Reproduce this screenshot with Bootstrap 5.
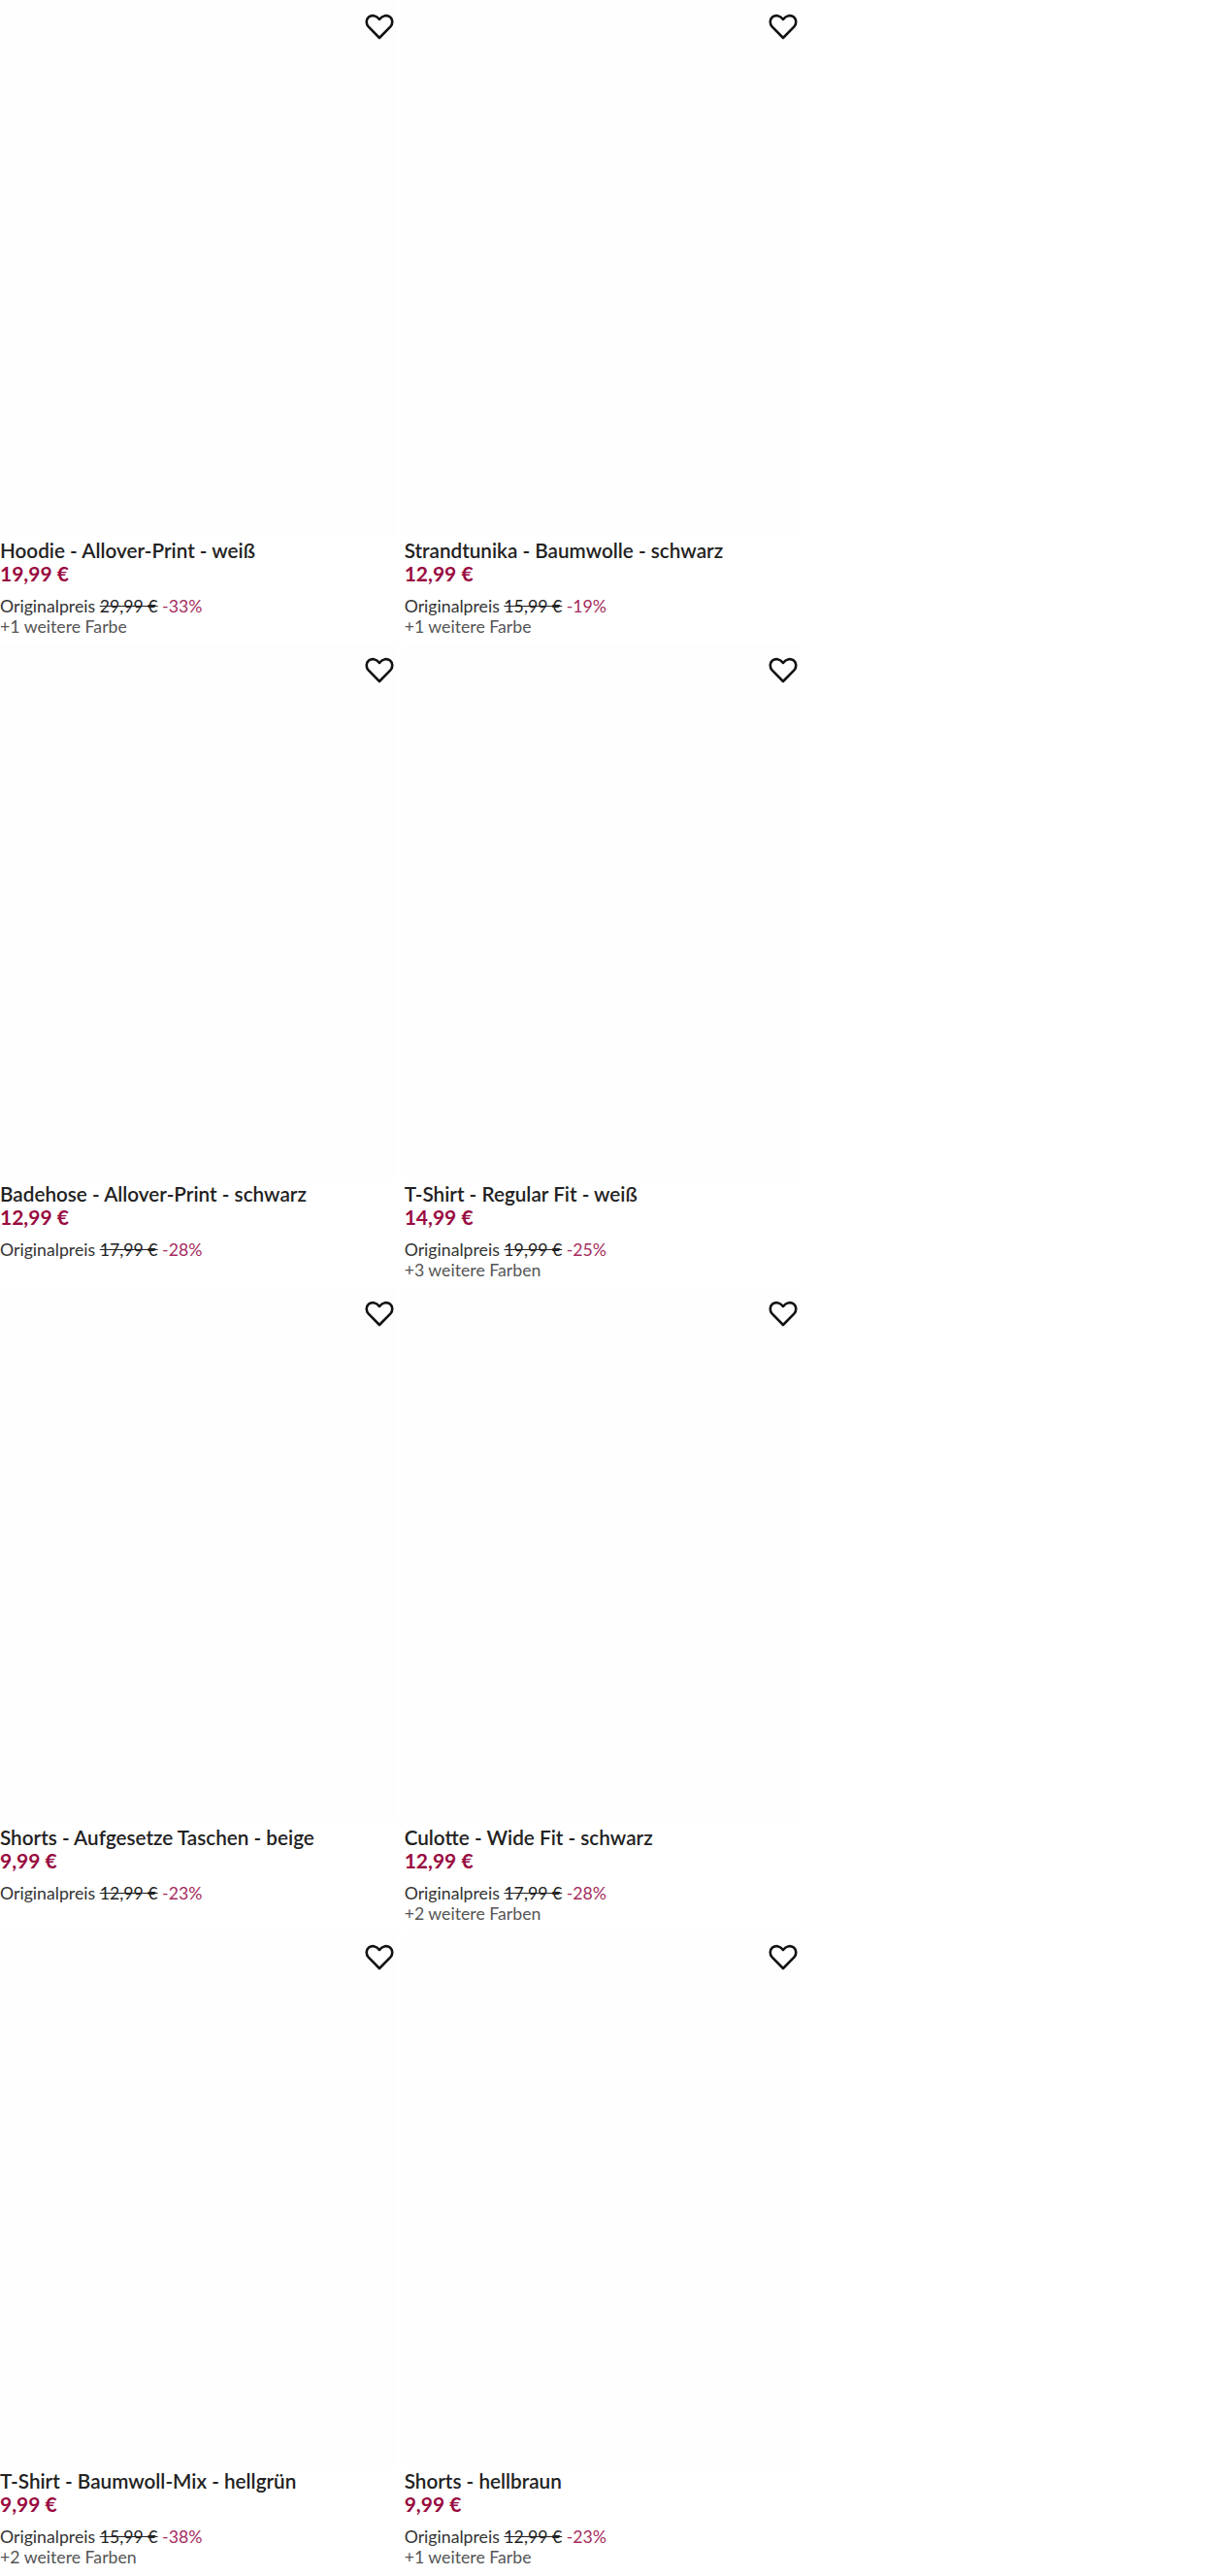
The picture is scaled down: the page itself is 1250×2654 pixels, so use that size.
<!DOCTYPE html>
<html lang="de">
<head>
<meta charset="utf-8">
<title>Produkte</title>
<link href="https://cdn.jsdelivr.net/npm/bootstrap@5.3.0/dist/css/bootstrap.min.css" rel="stylesheet">
<style>
body{margin:0;background:#fff;font-family:"Lato","Noto Sans",sans-serif;overflow:hidden}
.prod-grid{display:grid;grid-template-columns:repeat(3,1fr);grid-auto-rows:663px}
.prod-item{position:relative;padding-right:9px}
.prod-img{height:552px;background:#fefefe}
.heart-btn{position:absolute;top:11px;right:10px;width:32px;height:32px;padding:0;border:0;background:transparent;line-height:0}
.prod-name{font-size:20.7px;line-height:24px;font-weight:600;color:#222;margin:0;padding-top:3px}
.prod-price{font-size:21px;line-height:24px;font-weight:700;color:#990b3f}
.prod-orig{font-size:17.7px;line-height:20px;color:#333;margin-top:12px}
.prod-orig s{color:#222}
.prod-off{color:#a52b5d}
.prod-more{font-size:17.7px;line-height:21px;color:#555}
</style>
</head>
<body>
<div class="prod-grid" id="g">
<div class="prod-item"><div class="prod-img"></div><button class="heart-btn" aria-label="Merken"><svg width="32" height="32" viewBox="0 0 32 32" fill="none" stroke="#111" stroke-width="2.6" stroke-linejoin="round"><path d="M16 28 4.800 16.600C1.800 13.400 2.200 9 5 6.600c2.900-2.400 7.800-2.100 11 2.400 3.200-4.500 8.100-4.800 11-2.400 2.800 2.400 3.200 6.800.2 10z"/></svg></button><p class="prod-name">Hoodie - Allover-Print - weiß</p><div class="prod-price">19,99 €</div><div class="prod-orig">Originalpreis <s>29,99 €</s> <span class="prod-off">-33%</span></div><div class="prod-more">+1 weitere Farbe</div></div>
<div class="prod-item"><div class="prod-img"></div><button class="heart-btn" aria-label="Merken"><svg width="32" height="32" viewBox="0 0 32 32" fill="none" stroke="#111" stroke-width="2.6" stroke-linejoin="round"><path d="M16 28 4.800 16.600C1.800 13.400 2.200 9 5 6.600c2.900-2.400 7.800-2.100 11 2.400 3.200-4.500 8.100-4.800 11-2.400 2.800 2.400 3.200 6.800.2 10z"/></svg></button><p class="prod-name">Strandtunika - Baumwolle - schwarz</p><div class="prod-price">12,99 €</div><div class="prod-orig">Originalpreis <s>15,99 €</s> <span class="prod-off">-19%</span></div><div class="prod-more">+1 weitere Farbe</div></div>
<div></div>
<div class="prod-item"><div class="prod-img"></div><button class="heart-btn" aria-label="Merken"><svg width="32" height="32" viewBox="0 0 32 32" fill="none" stroke="#111" stroke-width="2.6" stroke-linejoin="round"><path d="M16 28 4.800 16.600C1.800 13.400 2.200 9 5 6.600c2.900-2.400 7.800-2.100 11 2.400 3.200-4.500 8.100-4.800 11-2.400 2.800 2.400 3.200 6.800.2 10z"/></svg></button><p class="prod-name">Badehose - Allover-Print - schwarz</p><div class="prod-price">12,99 €</div><div class="prod-orig">Originalpreis <s>17,99 €</s> <span class="prod-off">-28%</span></div></div>
<div class="prod-item"><div class="prod-img"></div><button class="heart-btn" aria-label="Merken"><svg width="32" height="32" viewBox="0 0 32 32" fill="none" stroke="#111" stroke-width="2.6" stroke-linejoin="round"><path d="M16 28 4.800 16.600C1.800 13.400 2.200 9 5 6.600c2.900-2.400 7.800-2.100 11 2.400 3.200-4.500 8.100-4.800 11-2.400 2.800 2.400 3.200 6.800.2 10z"/></svg></button><p class="prod-name">T-Shirt - Regular Fit - weiß</p><div class="prod-price">14,99 €</div><div class="prod-orig">Originalpreis <s>19,99 €</s> <span class="prod-off">-25%</span></div><div class="prod-more">+3 weitere Farben</div></div>
<div></div>
<div class="prod-item"><div class="prod-img"></div><button class="heart-btn" aria-label="Merken"><svg width="32" height="32" viewBox="0 0 32 32" fill="none" stroke="#111" stroke-width="2.6" stroke-linejoin="round"><path d="M16 28 4.800 16.600C1.800 13.400 2.200 9 5 6.600c2.900-2.400 7.800-2.100 11 2.400 3.200-4.500 8.100-4.800 11-2.400 2.800 2.400 3.200 6.800.2 10z"/></svg></button><p class="prod-name">Shorts - Aufgesetze Taschen - beige</p><div class="prod-price">9,99 €</div><div class="prod-orig">Originalpreis <s>12,99 €</s> <span class="prod-off">-23%</span></div></div>
<div class="prod-item"><div class="prod-img"></div><button class="heart-btn" aria-label="Merken"><svg width="32" height="32" viewBox="0 0 32 32" fill="none" stroke="#111" stroke-width="2.6" stroke-linejoin="round"><path d="M16 28 4.800 16.600C1.800 13.400 2.200 9 5 6.600c2.900-2.400 7.800-2.100 11 2.400 3.200-4.500 8.100-4.800 11-2.400 2.800 2.400 3.200 6.800.2 10z"/></svg></button><p class="prod-name">Culotte - Wide Fit - schwarz</p><div class="prod-price">12,99 €</div><div class="prod-orig">Originalpreis <s>17,99 €</s> <span class="prod-off">-28%</span></div><div class="prod-more">+2 weitere Farben</div></div>
<div></div>
<div class="prod-item"><div class="prod-img"></div><button class="heart-btn" aria-label="Merken"><svg width="32" height="32" viewBox="0 0 32 32" fill="none" stroke="#111" stroke-width="2.6" stroke-linejoin="round"><path d="M16 28 4.800 16.600C1.800 13.400 2.200 9 5 6.600c2.900-2.400 7.800-2.100 11 2.400 3.200-4.500 8.100-4.800 11-2.400 2.800 2.400 3.200 6.800.2 10z"/></svg></button><p class="prod-name">T-Shirt - Baumwoll-Mix - hellgrün</p><div class="prod-price">9,99 €</div><div class="prod-orig">Originalpreis <s>15,99 €</s> <span class="prod-off">-38%</span></div><div class="prod-more">+2 weitere Farben</div></div>
<div class="prod-item"><div class="prod-img"></div><button class="heart-btn" aria-label="Merken"><svg width="32" height="32" viewBox="0 0 32 32" fill="none" stroke="#111" stroke-width="2.6" stroke-linejoin="round"><path d="M16 28 4.800 16.600C1.800 13.400 2.200 9 5 6.600c2.900-2.400 7.800-2.100 11 2.400 3.200-4.500 8.100-4.800 11-2.400 2.800 2.400 3.200 6.800.2 10z"/></svg></button><p class="prod-name">Shorts - hellbraun</p><div class="prod-price">9,99 €</div><div class="prod-orig">Originalpreis <s>12,99 €</s> <span class="prod-off">-23%</span></div><div class="prod-more">+1 weitere Farbe</div></div>
<div></div>
</div>
<script src="https://cdn.jsdelivr.net/npm/bootstrap@5.3.0/dist/js/bootstrap.bundle.min.js"></script>
</body>
</html>
